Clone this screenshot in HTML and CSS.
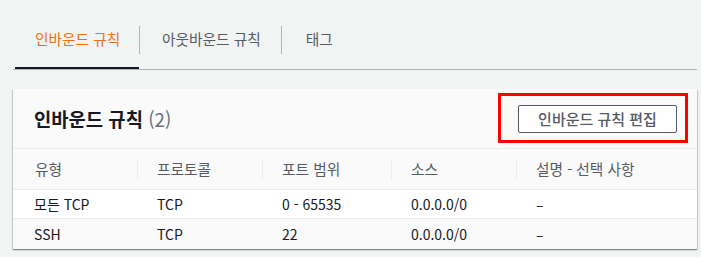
FILE: index.html
```html
<!DOCTYPE html>
<html lang="ko">
<head>
<meta charset="utf-8">
<link rel="stylesheet" href="styles.css">
</head>
<body>
<div class="page">
  <div class="tabs">
    <div class="tab active">인바운드 규칙</div>
    <div class="tab-sep"></div>
    <div class="tab tab-out">아웃바운드 규칙</div>
    <div class="tab-sep"></div>
    <div class="tab tab-tag">태그</div>
  </div>
  <div class="card">
    <div class="card-header">
      <h2 class="title">인바운드 규칙 <span class="count">(2)</span></h2>
      <div class="btn-wrap">
        <button class="btn">인바운드 규칙 편집</button>
        <div class="highlight"></div>
      </div>
    </div>
    <div class="grid">
      <div class="hcell first"><span class="hc">유형</span></div>
      <div class="hcell"><span class="hc">프로토콜</span></div>
      <div class="hcell"><span class="hc">포트 범위</span></div>
      <div class="hcell"><span class="hc">소스</span></div>
      <div class="hcell"><span class="hc">설명 - 선택 사항</span></div>

      <div class="cell first">모든 TCP</div>
      <div class="cell">TCP</div>
      <div class="cell">0 - 65535</div>
      <div class="cell">0.0.0.0/0</div>
      <div class="cell">–</div>

      <div class="cell first alt">SSH</div>
      <div class="cell alt">TCP</div>
      <div class="cell alt">22</div>
      <div class="cell alt">0.0.0.0/0</div>
      <div class="cell alt">–</div>
    </div>
  </div>
</div>
</body>
</html>
```
FILE: styles.css
```css
* { box-sizing: border-box; }
html, body { margin: 0; padding: 0; }
body {
  background: #f2f3f3;
  font-family: "Noto Sans CJK KR", "Noto Sans", sans-serif;
  font-size: 14px;
  color: #16191f;
  width: 701px;
  height: 257px;
  overflow: hidden;
}
.page {
  margin-left: 13px;
  width: 684px;
}
.tabs {
  display: flex;
  align-items: center;
  height: 70px;
  border-bottom: 1px solid #aab7b8;
  padding-left: 2px;
}
.tab {
  height: 69px;
  padding: 7px 20px 0 20px;
  display: flex;
  align-items: center;
  color: #545b64;
  font-size: 14.7px;
  white-space: nowrap;
  flex: none;
}
.tab.active {
  color: #ec7211;
  box-shadow: inset 0 -2px 0 #16191f;
  width: 124px;
}
.tab-out { padding-left: 22px; padding-right: 20px; }
.tab-tag { padding-left: 24px; }
.tab-sep {
  width: 1px;
  height: 28px;
  margin-top: 11px;
  background: #aab7b8;
  flex: none;
}
.card {
  margin-top: 19px;
  background: #fff;
  box-shadow: 0 1px 1px 0 rgba(0,28,36,.3), 1px 1px 1px 0 rgba(0,28,36,.15), -1px 1px 1px 0 rgba(0,28,36,.15);
}
.card-header {
  display: flex;
  align-items: center;
  justify-content: space-between;
  height: 60px;
  background: #fafafa;
  border-bottom: 1px solid #eaeded;
  padding: 0 20px 0 21px;
}
.title {
  margin: 0;
  font-size: 18.8px;
  font-weight: 700;
  color: #16191f;
}
.count {
  font-weight: 400;
  color: #687078;
}
.btn-wrap {
  position: relative;
  display: flex;
}
.btn {
  width: 159px;
  height: 28px;
  border: 1px solid #545b64;
  border-radius: 2px;
  background: #fff;
  color: #545b64;
  font-family: inherit;
  font-size: 15px;
  font-weight: 500;
  padding: 0;
}
.highlight {
  position: absolute;
  left: -20px;
  top: -12px;
  right: -11px;
  bottom: -10px;
  border: 3px solid #ff0000;
}
.grid {
  display: grid;
  grid-template-columns: 124px 125px 129px 125px 1fr;
}
.hcell {
  height: 41px;
  background: #fafafa;
  border-bottom: 1px solid #eaeded;
  display: flex;
  align-items: center;
  color: #545b64;
  font-size: 14.7px;
}
.hc {
  border-left: 1px solid #eaeded;
  padding-left: 19px;
  line-height: 20px;
}
.hcell.first .hc { border-left: 0; padding-left: 22px; }
.cell {
  height: 29px;
  display: flex;
  align-items: center;
  padding-left: 20px;
  border-bottom: 1px solid #eaeded;
  background: #fff;
}
.cell.first { padding-left: 21px; }
.cell.alt { height: 30px; background: #fafafa; border-bottom: 0; }
```
